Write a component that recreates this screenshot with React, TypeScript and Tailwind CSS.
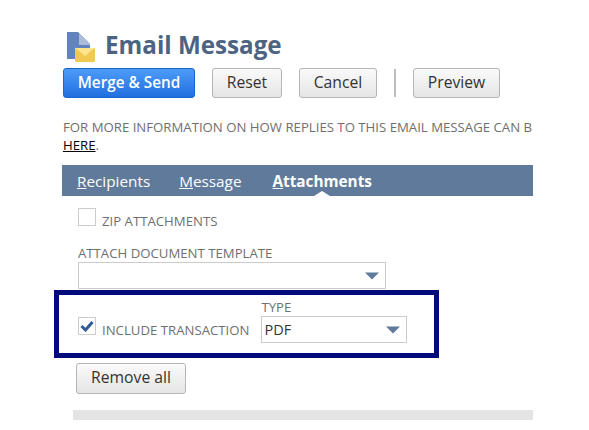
import React from 'react';

const FONT = { fontFamily: '"Open Sans", sans-serif' };

const GrayButton: React.FC<{ label: string; className: string }> = ({ label, className }) => (
    <button className={`h-[30px] rounded-[3px] border border-[#b5b5b5] bg-gradient-to-b from-[#fafafa] to-[#e5e5e5] pb-px text-[15.7px] font-medium text-[#333] ${className}`}>
        {label}
    </button>
);

const Caret: React.FC<{ className?: string }> = ({ className }) => (
    <svg width="14" height="9" viewBox="0 0 14 9" className={className}>
        <path d="M0 1.5 H14 L7 8.5 Z" fill="#5f7a9a" />
    </svg>
);

const Select: React.FC<{ value?: string; className: string }> = ({ value, className }) => (
    <div className={`flex h-[27px] items-center justify-between border border-[#cccccc] bg-white pl-[2px] pr-[6px] text-[14.5px] leading-none text-[#333] ${className}`}>
        <span className="translate-y-px">{value}</span>
        <Caret />
    </div>
);

const App: React.FC = () => {
    return (
        <div className="h-[430px] w-[589px] overflow-hidden bg-white" style={FONT}>
            <div className="ml-[62px] w-[471px] overflow-hidden pt-[32px]">
                <div className="ml-[5px] flex h-[30px] items-center gap-[10px]">
                    <svg width="28" height="30" viewBox="0 0 28 30">
                        <path d="M0 0 H11 L23 12 V16 H8 V27 H0 Z" fill="#6283bd" />
                        <path d="M12 1 L23 12 V13 H12 Z" fill="#a9bcdc" />
                        <rect x="8" y="16" width="20" height="14" rx="1.5" fill="#f2c950" />
                        <path d="M8.5 16 H27.5 L18 24 Z" fill="#ffe48c" />
                    </svg>
                    <h1 className="-translate-y-[2px] text-[24.2px] font-bold leading-none text-[#4d6382]">Email Message</h1>
                </div>

                <div className="ml-px mt-[6px] flex items-center">
                    <button className="h-[30px] w-[132px] rounded-[3px] border border-[#1a66c8] bg-gradient-to-b from-[#4d9bf8] to-[#1f6fe0] pb-px text-[15.3px] font-semibold text-white">
                        Merge &amp; Send
                    </button>
                    <GrayButton label="Reset" className="ml-[17px] w-[70px]" />
                    <GrayButton label="Cancel" className="ml-[17px] w-[78px]" />
                    <div className="ml-[17px] h-[28px] w-[2px] bg-[#bdbdbd]" />
                    <GrayButton label="Preview" className="ml-[17px] w-[87px]" />
                </div>

                <p className="ml-px mt-[20px] whitespace-nowrap text-[13.2px] leading-[18px] text-[#6f6f6f]">
                    FOR MORE INFORMATION ON HOW REPLIES TO THIS EMAIL MESSAGE CAN B
                </p>
                <p className="ml-px text-[13.2px] leading-[18px] text-[#6f6f6f]">
                    <a className="text-black underline">HERE</a>.
                </p>

                <div className="relative mt-[11px] flex h-[31px] items-center bg-[#5f7a9a] pl-[15px] text-[15.3px] text-white">
                    <span className="mr-[29px] translate-y-px"><u>R</u>ecipients</span>
                    <span className="mr-[31px] translate-y-px"><u>M</u>essage</span>
                    <span className="translate-y-px font-bold"><u>A</u>ttachments</span>
                    <div className="absolute bottom-0 left-[252px] h-0 w-0 border-x-[8px] border-b-[5px] border-x-transparent border-b-white" />
                </div>

                <div className="ml-[16px] mt-[12px] flex items-end">
                    <div className="h-[18px] w-[18px] border border-[#cccccc] bg-white" />
                    <span className="ml-[6px] translate-y-[3px] text-[13.2px] leading-[16px] text-[#6f6f6f]">ZIP ATTACHMENTS</span>
                </div>

                <div className="ml-[16px] mt-[19px] text-[13.2px] leading-[16px] text-[#6f6f6f]">ATTACH DOCUMENT TEMPLATE</div>
                <Select className="ml-[16px] mt-px w-[308px]" />
            </div>

            <div className="ml-[54px] mt-[1px] flex h-[68px] w-[385px] items-end border-[5px] border-[#000a7a] pb-[10px] pl-[19px]">
                <div className="mb-[8px] flex items-end">
                    <div className="flex h-[18px] w-[18px] items-center justify-center border border-[#cccccc] bg-white">
                        <svg width="14" height="12" viewBox="0 0 14 12">
                            <path d="M1.5 6 L5.5 10 L12.5 2" fill="none" stroke="#2f5c94" strokeWidth="3" />
                        </svg>
                    </div>
                    <span className="ml-[6px] translate-y-[3px] text-[13.2px] leading-[16px] text-[#6f6f6f]">INCLUDE TRANSACTION</span>
                </div>
                <div className="ml-[12px]">
                    <div className="-translate-y-px text-[13.2px] leading-[16px] text-[#6f6f6f]">TYPE</div>
                    <Select value="PDF" className="w-[146px]" />
                </div>
            </div>

            <div className="ml-[76px] mt-[5px]">
                <GrayButton label="Remove all" className="h-[31px] w-[110px]" />
            </div>
            <div className="ml-[73px] mt-[16px] h-[10px] w-[460px] bg-[#e4e4e4]" />
        </div>
    );
};

export default App;
